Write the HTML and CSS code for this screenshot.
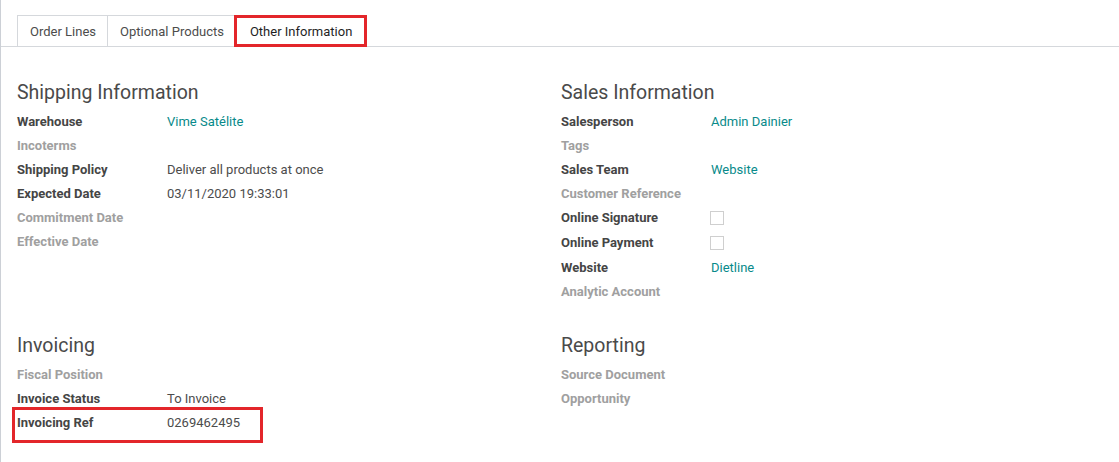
FILE: index.html
```html
<!DOCTYPE html>
<html>
<head>
<meta charset="utf-8">
<link rel="stylesheet" href="styles.css">
</head>
<body>
<div class="sheet">
  <div class="tabbar">
    <div class="tab">Order Lines</div>
    <div class="tab">Optional Products</div>
    <div class="tab active">Other Information<span class="mark mark-tab"></span></div>
  </div>
  <div class="content">
    <div class="grid">
      <div class="group">
        <div class="heading">Shipping Information</div>
        <div class="row"><span class="label">Warehouse</span><span class="value link">Vime Satélite</span></div>
        <div class="row"><span class="label muted">Incoterms</span></div>
        <div class="row"><span class="label">Shipping Policy</span><span class="value">Deliver all products at once</span></div>
        <div class="row"><span class="label">Expected Date</span><span class="value">03/11/2020 19:33:01</span></div>
        <div class="row"><span class="label muted">Commitment Date</span></div>
        <div class="row"><span class="label muted">Effective Date</span></div>
      </div>
      <div class="group">
        <div class="heading">Sales Information</div>
        <div class="row"><span class="label">Salesperson</span><span class="value link">Admin Dainier</span></div>
        <div class="row"><span class="label muted">Tags</span></div>
        <div class="row"><span class="label">Sales Team</span><span class="value link">Website</span></div>
        <div class="row"><span class="label muted">Customer Reference</span></div>
        <div class="row tall"><span class="label">Online Signature</span><span class="value"><span class="check"></span></span></div>
        <div class="row tall"><span class="label">Online Payment</span><span class="value"><span class="check"></span></span></div>
        <div class="row"><span class="label">Website</span><span class="value link">Dietline</span></div>
        <div class="row"><span class="label muted">Analytic Account</span></div>
      </div>
      <div class="group second">
        <div class="heading">Invoicing</div>
        <div class="row"><span class="label muted">Fiscal Position</span></div>
        <div class="row"><span class="label">Invoice Status</span><span class="value">To Invoice</span></div>
        <div class="row marked"><span class="label">Invoicing Ref</span><span class="value">0269462495</span><span class="mark mark-row"></span></div>
      </div>
      <div class="group second">
        <div class="heading">Reporting</div>
        <div class="row"><span class="label muted">Source Document</span></div>
        <div class="row"><span class="label muted">Opportunity</span></div>
      </div>
    </div>
  </div>
</div>
</body>
</html>
```

FILE: styles.css
```css
* { box-sizing: border-box; }
html, body { margin: 0; padding: 0; background: #fff; }
body {
  font-family: Roboto, "Liberation Sans", sans-serif;
  font-size: 13px;
  color: #4c4c4c;
}
.sheet {
  min-height: 462px;
  border-left: 1px solid #ccd0d6;
}
.tabbar {
  display: flex;
  padding: 15px 0 0 16px;
  border-bottom: 1px solid #d5d8dc;
}
.tab {
  position: relative;
  height: 31px;
  line-height: 31px;
  padding: 0 11px 0 12px;
  border: 1px solid #d5d8dc;
  border-bottom: none;
  margin-left: -1px;
  color: #4c4c4c;
  white-space: nowrap;
}
.tab:first-child { margin-left: 0; }
.tab.active {
  color: #1f1f1f;
  padding: 0 14px 0 14px;
  background: #fff;
  margin-bottom: -1px;
  height: 32px;
}
.mark {
  position: absolute;
  border: 3px solid #e3262a;
  pointer-events: none;
}
.mark-tab {
  left: -2px;
  right: -1px;
  top: -1px;
  bottom: 0px;
}
.content {
  padding: 33px 14px 0 16px;
}
.grid {
  display: grid;
  grid-template-columns: 1fr 1fr;
  row-gap: 30px;
}
.heading {
  font-size: 19.5px;
  line-height: 24px;
  padding-top: 1px;
  color: #4a4a4a;
  margin-bottom: 4px;
}
.row {
  display: flex;
  align-items: center;
  height: 24px;
  position: relative;
}
.row.tall { height: 25px; }
.label {
  width: 150px;
  flex: none;
  font-weight: 700;
  color: #454545;
}
.label.muted { color: #a0a0a0; }
.value { color: #4c4c4c; display: flex; align-items: center; }
.value.link { color: #088a8a; }
.check {
  display: inline-block;
  width: 14px;
  height: 14px;
  border: 1px solid #cfcfcf;
  background: #fff;
  margin-left: -1px;
}
.mark-row {
  left: -5px;
  top: -3px;
  width: 251px;
  height: 36px;
}
```
